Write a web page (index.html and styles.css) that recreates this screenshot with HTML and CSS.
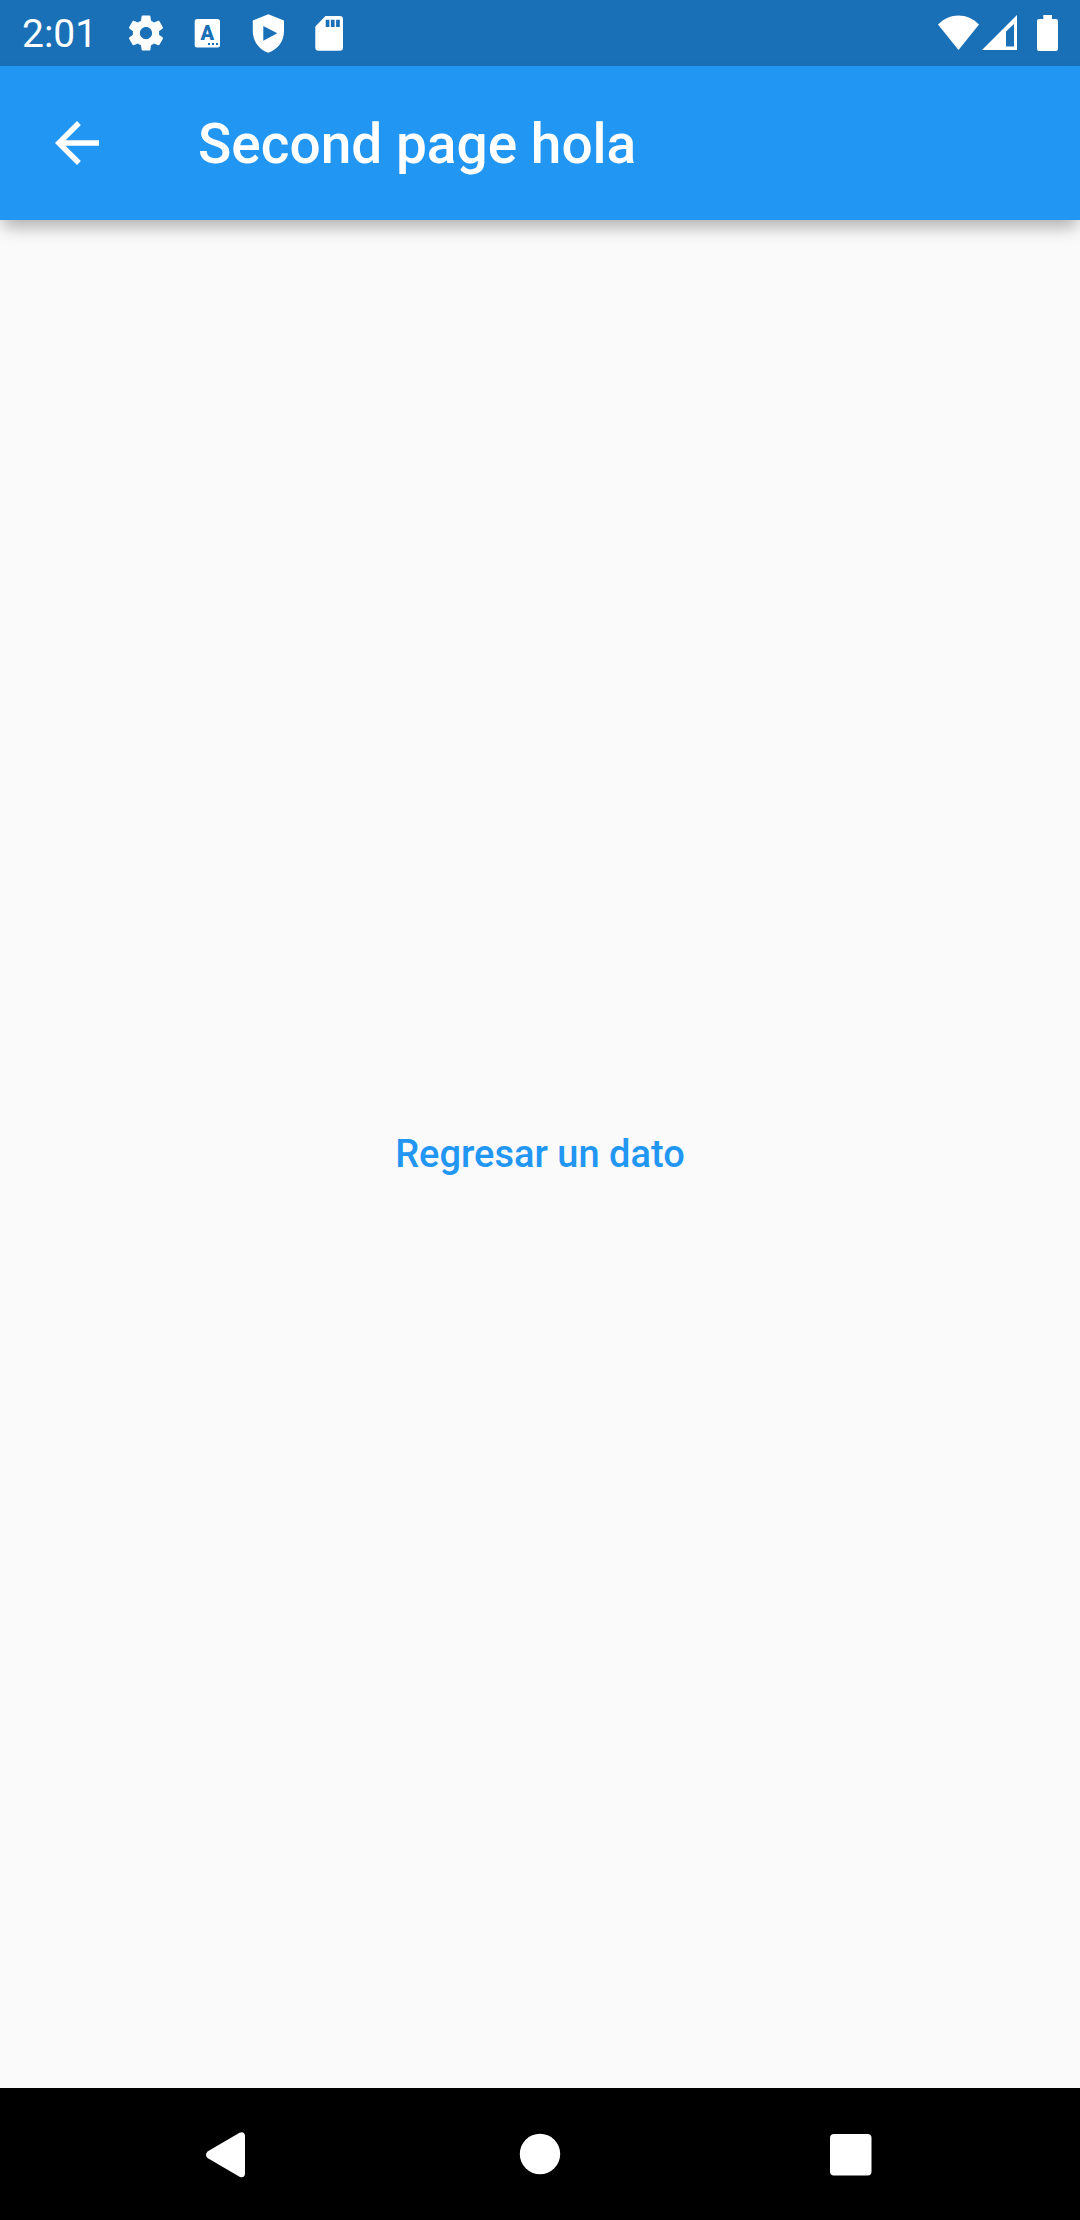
FILE: index.html
```html
<!DOCTYPE html>
<html lang="es">
<head>
<meta charset="utf-8">
<meta name="viewport" content="width=device-width, initial-scale=1">
<title>Second page hola</title>
<link rel="stylesheet" href="styles.css">
</head>
<body class="screen">
  <div class="status-bar">
    <time class="clock">2:01</time>
    <div class="notifications">
      <svg class="notification" viewBox="0 0 24 24" aria-hidden="true"><path d="M19.43 12.98c.04-.32.07-.64.07-.98s-.03-.66-.07-.98l2.11-1.65c.19-.15.24-.42.12-.64l-2-3.46c-.12-.22-.39-.3-.61-.22l-2.49 1c-.52-.4-1.08-.73-1.69-.98l-.38-2.65C14.46 2.18 14.25 2 14 2h-4c-.25 0-.46.18-.49.42l-.38 2.65c-.61.25-1.17.59-1.69.98l-2.49-1c-.23-.09-.49 0-.61.22l-2 3.46c-.13.22-.07.49.12.64l2.11 1.65c-.04.32-.07.65-.07.98s.03.66.07.98l-2.11 1.65c-.19.15-.24.42-.12.64l2 3.46c.12.22.39.3.61.22l2.49-1c.52.4 1.08.73 1.69.98l.38 2.65c.03.24.24.42.49.42h4c.25 0 .46-.18.49-.42l.38-2.65c.61-.25 1.17-.59 1.69-.98l2.49 1c.23.09.49 0 .61-.22l2-3.46c.12-.22.07-.49-.12-.64l-2.11-1.65zM12 15.5c-1.93 0-3.5-1.57-3.5-3.5s1.57-3.5 3.5-3.5 3.5 1.57 3.5 3.5-1.57 3.5-3.5 3.5z"/></svg>
      <svg class="notification" viewBox="0 0 42 42" aria-hidden="true">
        <rect x="8.7" y="7" width="25.3" height="28.5" rx="2.5"/>
        <text class="badge-letter" x="21.3" y="28" text-anchor="middle">A</text>
        <path class="cutout" d="M22 31h2v2h-2zM26 31h2v2h-2zM30 31h2v2h-2z"/>
      </svg>
      <svg class="notification" viewBox="0 0 42 42" aria-hidden="true"><path fill-rule="evenodd" d="M21.3 2.3 37 8.4V19c0 10-6 18.5-15.7 21.7C11.8 37.5 5.8 29 5.8 19V8.4zM16.3 14v14.7L30.3 21.3z"/></svg>
      <svg class="notification" viewBox="0 0 42 42" aria-hidden="true"><path fill-rule="evenodd" d="M17.5 4H31.7a3.3 3.3 0 0 1 3.3 3.3V35.4a3.3 3.3 0 0 1-3.3 3.3H10.6a3.3 3.3 0 0 1-3.3-3.3V14.5zM17.7 7.7V15h3.7V7.700zM22.9 7.7V15h3.7V7.7zM28.1 7.7V15h3.7V7.7z"/></svg>
    </div>
    <div class="indicators">
      <svg width="41" height="36" viewBox="0 0 41 36" aria-hidden="true"><path d="M20.5 35 0 9.500C6 3.500 13 .5 20.500.5S35 3.500 41 9.500z"/></svg>
      <svg width="35" height="36" viewBox="0 0 35 36" aria-hidden="true"><path fill-rule="evenodd" d="M35 0V35H0zM24 16.500V31.500H32V9z"/></svg>
      <svg class="battery" width="21" height="36" viewBox="0 0 21 36" aria-hidden="true"><path d="M6.300 0h8.700v4H19a2 2 0 0 1 2 2v28a2 2 0 0 1-2 2H2a2 2 0 0 1-2-2V6a2 2 0 0 1 2-2h4.300z"/></svg>
    </div>
  </div>

  <header class="app-bar">
    <button class="back" type="button" aria-label="Back">
      <svg width="66" height="66" viewBox="0 0 24 24" aria-hidden="true"><path d="M20 11H7.830l5.590-5.590L12 4l-8 8 8 8 1.410-1.410L7.830 13H20v-2z"/></svg>
    </button>
    <h1 class="title">Second page hola</h1>
  </header>

  <main class="content">
    <button class="text-button" type="button">Regresar un dato</button>
  </main>

  <nav class="nav-bar" aria-label="System navigation">
    <button class="nav-button" type="button" aria-label="Back">
      <svg width="66" height="66" viewBox="0 0 66 66" aria-hidden="true"><path d="M12.500 30.500 44.500 11.800Q49 10 50 14.500V53Q49 57.500 44.500 55.700L12.500 37Q9.500 33.800 12.500 30.500z"/></svg>
    </button>
    <button class="nav-button" type="button" aria-label="Home">
      <svg width="66" height="66" viewBox="0 0 66 66" aria-hidden="true"><circle cx="33" cy="33" r="20.200"/></svg>
    </button>
    <button class="nav-button" type="button" aria-label="Overview">
      <svg width="66" height="66" viewBox="0 0 66 66" aria-hidden="true"><rect x="11" y="13" width="41.500" height="41.500" rx="4"/></svg>
    </button>
  </nav>
</body>
</html>
```

FILE: styles.css
```css
:root {
  --primary: #2196f3;
  --primary-dark: #1a70b7;
  --surface: #fafafa;
}

* {
  box-sizing: border-box;
}

.screen {
  display: flex;
  flex-direction: column;
  min-height: 100vh;
  margin: 0;
  background: var(--surface);
  font-family: Roboto, "Noto Sans", sans-serif;
}

button {
  padding: 0;
  border: 0;
  background: none;
  font: inherit;
  color: inherit;
  cursor: pointer;
}

svg {
  display: block;
  flex: none;
  fill: currentColor;
}

.status-bar {
  display: flex;
  align-items: center;
  height: 66px;
  padding: 0 22px;
  background: var(--primary-dark);
  color: #fff;
}

.clock {
  min-width: 103px;
  padding-top: 2px;
  font-size: 39px;
  line-height: 48px;
}

.notifications {
  display: flex;
  gap: 19px;
}

.notification {
  width: 42px;
  height: 42px;
}

.badge-letter {
  fill: var(--primary-dark);
  font-size: 20px;
  font-weight: 900;
}

.cutout {
  fill: var(--primary-dark);
}

.indicators {
  display: flex;
  gap: 3px;
  margin-left: auto;
}

.battery {
  margin-left: 17px;
}

.app-bar {
  display: flex;
  align-items: center;
  position: relative;
  height: 154px;
  background: var(--primary);
  color: #fff;
  box-shadow: 0 10px 16px -3px rgba(0, 0, 0, 0.3);
}

.back {
  display: grid;
  place-items: center;
  width: 154px;
  height: 154px;
}

.title {
  margin: 0 44px;
  padding-top: 2px;
  font-size: 55px;
  font-weight: 500;
  line-height: 64px;
}

.content {
  display: grid;
  flex: 1;
  place-items: center;
}

.text-button {
  padding: 28px 22px;
  color: var(--primary);
  font-size: 38px;
  font-weight: 500;
  line-height: 44px;
}

.nav-bar {
  display: grid;
  grid-template-columns: repeat(3, 1fr);
  height: 132px;
  padding: 0 72px;
  background: #000;
  color: #fff;
}

.nav-button {
  display: grid;
  place-items: center;
}
```
